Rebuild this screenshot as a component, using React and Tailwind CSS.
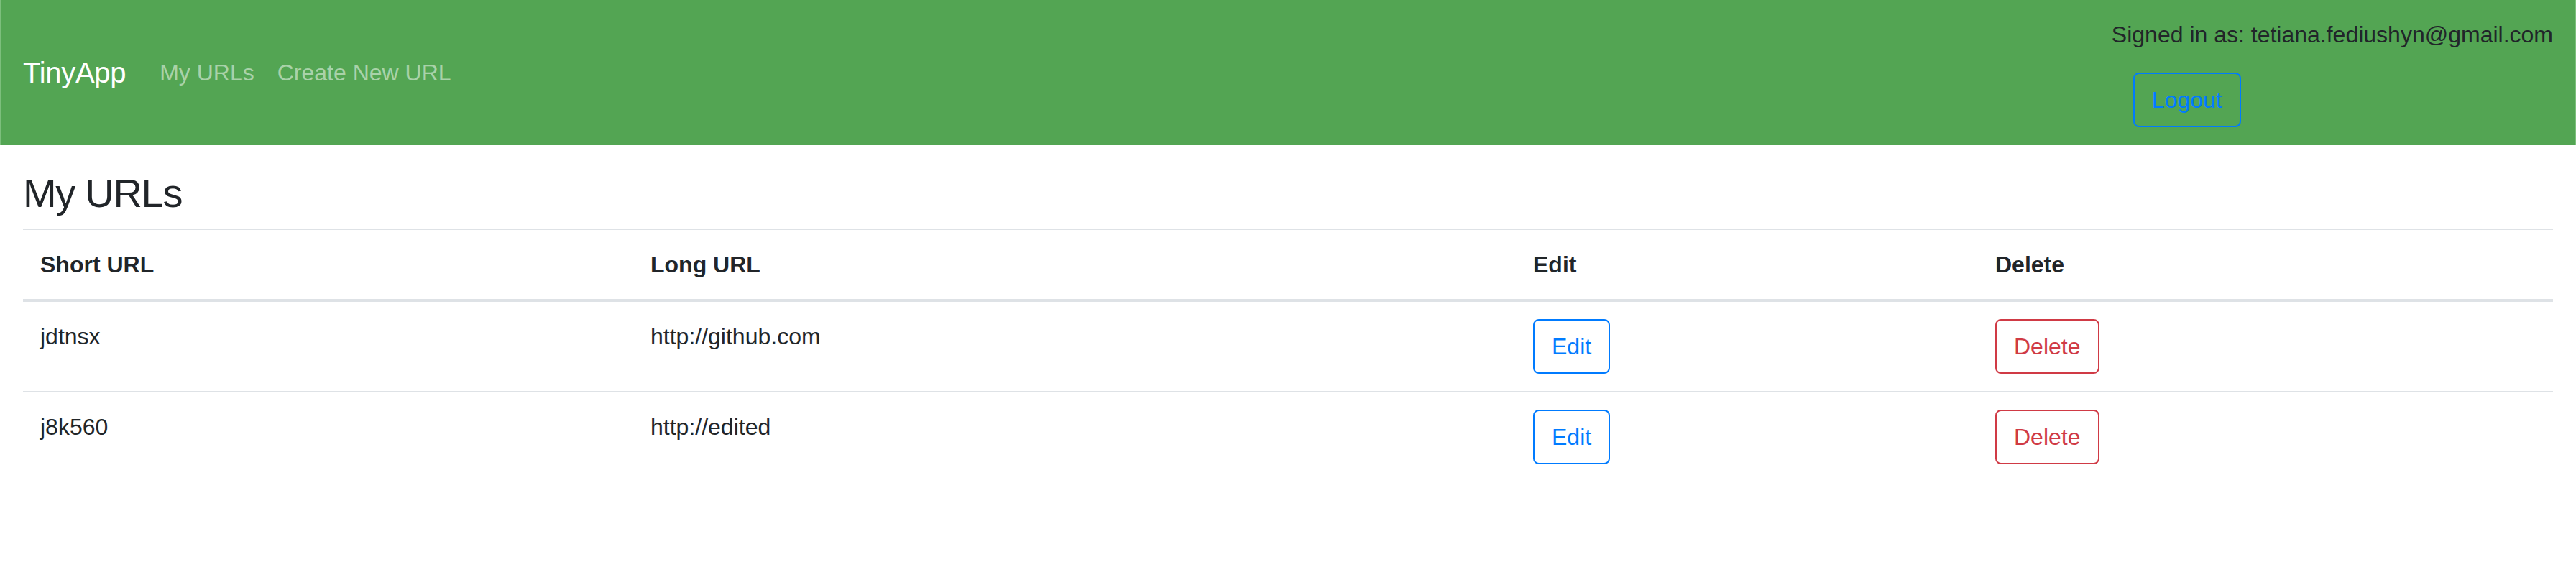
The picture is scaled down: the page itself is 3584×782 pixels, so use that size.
import React from 'react';

const urls = [
    { short: 'jdtnsx', long: 'http://github.com' },
    { short: 'j8k560', long: 'http://edited' },
];

const cols = 'grid grid-cols-[849px_1228px_643px_800px]';

const App = () => {
    return (
        <div className="min-h-screen bg-white text-[#212529] font-['Liberation_Sans',Arial,sans-serif]">
            {/* Navbar */}
            <nav className="h-[202px] bg-[#53a553] border-x-2 border-[#7cbf7c] flex items-center justify-between pl-[30px] pr-[30px]">
                <div className="flex items-center">
                    <a className="text-white text-[40px] leading-[60px] tracking-[-0.3px] mr-[31px]">TinyApp</a>
                    <a className="text-white/50 text-[32px] leading-[48px] px-[16px]">My URLs</a>
                    <a className="text-white/50 text-[32px] leading-[48px] px-[16px]">Create New URL</a>
                </div>
                <div className="flex flex-col items-start self-start pt-[24px]">
                    <span className="text-[32px] leading-[48px] text-[#212529]">
                        Signed in as: tetiana.fediushyn@gmail.com
                    </span>
                    <button className="mt-[29px] ml-[30px] h-[76px] px-[24px] border-2 border-[#007bff] rounded-[8px] text-[#007bff] text-[32px] leading-[48px]">
                        Logout
                    </button>
                </div>
            </nav>

            {/* Content */}
            <main className="px-[32px] pt-[33px]">
                <h3 className="text-[56px] leading-[67px] font-medium tracking-[-1.3px] mb-[16px]">My URLs</h3>
                <div className="w-[3520px] text-[32px] leading-[48px]">
                    <div className={`${cols} border-t-2 border-b-4 border-[#dee2e6] font-bold`}>
                        <div className="p-[24px]">Short URL</div>
                        <div className="p-[24px]">Long URL</div>
                        <div className="p-[24px]">Edit</div>
                        <div className="p-[24px]">Delete</div>
                    </div>
                    {urls.map((url, index) => (
                        <div key={url.short} className={`${cols} ${index > 0 ? 'border-t-2 border-[#dee2e6]' : ''}`}>
                            <div className="p-[24px]">{url.short}</div>
                            <div className="p-[24px]">{url.long}</div>
                            <div className="p-[24px]">
                                <button className="h-[76px] px-[24px] border-2 border-[#007bff] rounded-[8px] text-[#007bff]">
                                    Edit
                                </button>
                            </div>
                            <div className="p-[24px]">
                                <button className="h-[76px] px-[24px] border-2 border-[#d03a45] rounded-[8px] text-[#d03a45]">
                                    Delete
                                </button>
                            </div>
                        </div>
                    ))}
                </div>
            </main>
        </div>
    );
};

export default App;
